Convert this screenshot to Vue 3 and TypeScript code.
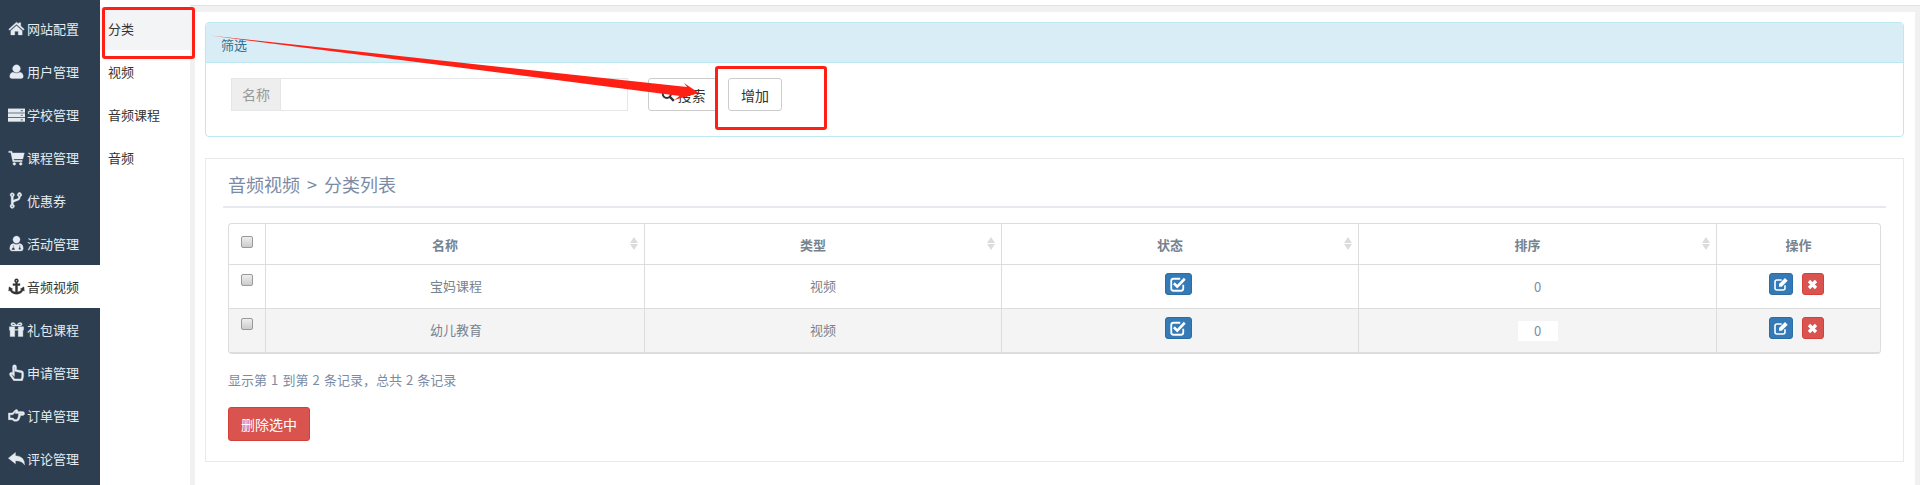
<script setup lang="ts">
interface NavItem { label: string; icon: string; active?: boolean }
const nav: NavItem[] = [
  { label: '网站配置', icon: 'home' },
  { label: '用户管理', icon: 'user' },
  { label: '学校管理', icon: 'server' },
  { label: '课程管理', icon: 'cart' },
  { label: '优惠券', icon: 'fork' },
  { label: '活动管理', icon: 'doctor' },
  { label: '音频视频', icon: 'anchor', active: true },
  { label: '礼包课程', icon: 'gift' },
  { label: '申请管理', icon: 'handup' },
  { label: '订单管理', icon: 'handright' },
  { label: '评论管理', icon: 'reply' },
]
const icons: Record<string, string> = {
  home: 'M12 3 L15 5.7 V4 H18 V8.4 L23 13 L21.6 14.5 L12 6 L2.4 14.5 L1 13 Z M12 8 L20 15 V21 H14.5 V16 H9.5 V21 H4 V15 Z',
  user: 'M12 2.5 A5.5 5.5 0 1 1 11.99 2.5 Z M7 13 Q12 16 17 13 Q21.5 14 21.5 19 Q21.5 22 18.5 22 H5.5 Q2.5 22 2.5 19 Q2.5 14 7 13 Z',
  server: 'M0 4 H24 V9 H0 Z M0 10.5 H24 V15.5 H0 Z M0 17 H24 V22 H0 Z M18 5.7 V7.3 H21 V5.7 Z M18 12.2 V13.8 H21 V12.2 Z M18 18.7 V20.3 H21 V18.7 Z',
  cart: 'M1 3 H5.5 L6.2 5.5 H23 L21 14 H8 L8.4 16 H20 V18 H6.8 L4 5 H1 Z M9 19 A2 2 0 1 1 8.99 19 Z M18 19 A2 2 0 1 1 17.99 19 Z',
  fork: 'M6 1 A3 3 0 0 1 7.5 6.6 V11.5 Q9 10.5 12 10 Q15 9.5 15 7 V6.6 A3 3 0 1 1 17.5 6.6 Q17.5 11 13 12.3 Q8.5 13.5 7.5 15 V17.4 A3 3 0 1 1 4.5 17.4 V6.6 A3 3 0 0 1 6 1 Z M6 3 A1 1 0 1 0 6.01 3 Z M16.2 3 A1 1 0 1 0 16.21 3 Z M6 19 A1 1 0 1 0 6.01 19 Z',
  doctor: 'M12 1.5 A5 5 0 1 1 11.99 1.5 Z M7.5 12 Q12 15 16.5 12 Q21.5 13 21.5 19 Q21.5 22.5 18.5 22.5 H5.5 Q2.5 22.5 2.5 19 Q2.5 13 7.5 12 Z M7 14.5 V18 H6 L5 21 H10 L9 18 H8 V14.5 Z M16 14.5 V17.5 A1.6 1.6 0 1 0 17.2 17.5 V14.5 Z',
  anchor: 'M12 1 A2.8 2.8 0 0 1 13.5 6.2 V8 H17 V10.5 H13.5 V19.6 Q17.5 19 19 16.5 L17.3 15.5 L22.5 12.5 L23 18.5 L21.2 17.6 Q18.5 23 12 23 Q5.5 23 2.8 17.6 L1 18.5 L1.5 12.5 L6.7 15.5 L5 16.5 Q6.5 19 10.5 19.6 V10.5 H7 V8 H10.5 V6.2 A2.8 2.8 0 0 1 12 1 Z M12 2.8 A1 1 0 1 0 12.01 2.8 Z',
  gift: 'M2 8 H9.5 V12 H14.5 V8 H22 V13 H21 V22 H14.5 V13 H9.5 V22 H3 V13 H2 Z M7 2 Q10 2 12 6 Q14 2 17 2 Q20 2 20 4.5 Q20 7 17 7 H7 Q4 7 4 4.5 Q4 2 7 2 Z M7 3.8 Q6 3.8 6 4.7 Q6 5.5 7 5.5 H10 Q8.5 3.8 7 3.8 Z M17 3.8 Q15.5 3.8 14 5.5 H17 Q18 5.5 18 4.7 Q18 3.8 17 3.8 Z',
  handup: 'M9 1 Q12 1 12 4 V8 L19.5 9.5 Q22 10 22 13 V18 L20.5 23.5 H8 L2.5 16 Q1 13.5 3.5 12 Q5 11.2 6.5 12.5 V4 Q6.5 1 9 1 Z M9.2 4 Q9 4 9 4.5 V17.8 L5.8 14.8 Q5 14.2 4.8 14.8 L9.5 21 H18.4 L19.3 17.6 V13.2 Q19.3 12.4 18.5 12.2 L9.6 10.4 V4.5 Q9.6 4 9.2 4 Z',
  handright: 'M0.5 8.5 H6 L10.5 4 Q13 2.5 14 5 L13.5 6.5 H20.5 Q23.5 6.5 23.5 9.3 Q23.5 12 20.5 12 H17.5 Q17.5 14.5 16.5 16 Q16 19.5 12.5 20 H8.5 L6 18 H0.5 Z M3 11 V15.5 H7 L9.4 17.5 H12 Q13.8 17.2 14 14.8 Q15 13.5 14.8 9.5 H20.5 Q21 9.5 21 9.2 Q21 9 20.5 9 H10.2 L11 6.5 L7 11 Z',
  reply: 'M10.5 3.5 V8 Q23.5 8.5 23.5 21 Q20 15 10.5 15 V19.5 L0.5 11.5 Z',
}
const columns = [
  { label: '名称', sortable: true, cls: 'c-name' },
  { label: '类型', sortable: true, cls: 'c-type' },
  { label: '状态', sortable: true, cls: 'c-state' },
  { label: '排序', sortable: true, cls: 'c-sort' },
  { label: '操作', sortable: false, cls: 'c-act' },
]
const rows = [
  { name: '宝妈课程', type: '视频', sort: 0, odd: false },
  { name: '幼儿教育', type: '视频', sort: 0, odd: true },
]
const subs = ['分类', '视频', '音频课程', '音频']
</script>

<template>
  <div class="page">
    <aside class="nav">
      <a v-for="n in nav" :key="n.label" class="nav-item" :class="{ on: n.active }">
        <svg class="nav-ico" viewBox="0 0 24 24"><path :d="icons[n.icon]" fill="currentColor" fill-rule="evenodd" /></svg>
        <span>{{ n.label }}</span>
      </a>
    </aside>
    <nav class="sub">
      <a v-for="(s, i) in subs" :key="s" class="sub-item" :class="{ on: i === 0 }">{{ s }}</a>
    </nav>
    <main class="main">
      <div class="topline"></div>
      <div class="content">
        <section class="filter">
          <header class="filter-head">筛选</header>
          <div class="filter-body">
            <div class="group">
              <span class="addon">名称</span>
              <input class="input" />
            </div>
            <button class="btn search">
              <svg class="s-ico" viewBox="0 0 24 24"><circle cx="10" cy="10" r="7" fill="none" stroke="currentColor" stroke-width="3.4" /><path d="M15 15 L22 22" stroke="currentColor" stroke-width="4" /></svg>
              搜索
            </button>
            <button class="btn">增加</button>
          </div>
        </section>
        <section class="list">
          <h3 class="title">音频视频 &gt; 分类列表</h3>
          <div class="table">
            <div class="row head">
              <div class="cell c-check"><span class="check"></span></div>
              <div v-for="c in columns" :key="c.label" class="cell" :class="[c.cls, { sortable: c.sortable }]">
                <b>{{ c.label }}</b>
                <span v-if="c.sortable" class="sort"><i class="up"></i><i class="down"></i></span>
              </div>
            </div>
            <div v-for="r in rows" :key="r.name" class="row body" :class="{ odd: r.odd }">
              <div class="cell c-check"><span class="check"></span></div>
              <div class="cell c-name"><span class="val">{{ r.name }}</span></div>
              <div class="cell c-type"><span class="val">{{ r.type }}</span></div>
              <div class="cell c-state">
                <span class="mini blue state">
                  <svg viewBox="0 0 24 24" class="mini-ico big"><path d="M19 13 V18 Q19 21 16 21 H6 Q3 21 3 18 V8 Q3 5 6 5 H15" fill="none" stroke="#fff" stroke-width="2.4" /><path d="M6.5 11 L11 15.5 L21 5" fill="none" stroke="#fff" stroke-width="3.4" /></svg>
                </span>
              </div>
              <div class="cell c-sort"><span class="num">{{ r.sort }}</span></div>
              <div class="cell c-act">
                <div class="acts">
                  <span class="mini blue edit">
                    <svg viewBox="0 0 24 24" class="mini-ico"><path d="M18 14 V18 Q18 21 15 21 H6 Q3 21 3 18 V9 Q3 6 6 6 H13" fill="none" stroke="#fff" stroke-width="2.4" /><path d="M9 12 L18 3 L22 7 L13 16 H9 Z" fill="#fff" /></svg>
                  </span>
                  <span class="mini red del">
                    <svg viewBox="0 0 24 24" class="mini-ico x"><path d="M5.5 5.5 L18.5 18.5 M18.5 5.5 L5.5 18.5" stroke="#fff" stroke-width="6" /></svg>
                  </span>
                </div>
              </div>
            </div>
          </div>
          <p class="summary">显示第 1 到第 2 条记录，总共 2 条记录</p>
          <button class="danger">删除选中</button>
        </section>
      </div>
    </main>

    <div class="mark box-a"></div>
    <div class="mark box-b"></div>
    <svg class="arrow" width="1920" height="485" viewBox="0 0 1920 485">
      <path d="M210 35.5 L687 87 L684 83 L699 93 L674 100 L680 96 Z" fill="#ff2015" />
    </svg>
  </div>
</template>

<style>
html, body { margin: 0; background: #fff; }
</style>

<style scoped>
.page {
  position: relative;
  display: flex;
  width: 1920px;
  height: 485px;
  overflow: hidden;
  font-family: "Noto Sans CJK SC", "Liberation Sans", sans-serif;
  font-size: 13px;
  color: #333;
}
.nav {
  flex: 0 0 100px;
  box-sizing: border-box;
  padding-top: 7px;
  background: #2c3e50;
}
.nav-item {
  display: flex;
  align-items: center;
  height: 43px;
  box-sizing: border-box;
  padding-left: 8px;
  gap: 2px;
  color: #e4ebf1;
}
.nav-item.on { background: #fff; color: #333; }
.nav-ico { width: 17px; height: 17px; flex: none; }
.nav-ico path { stroke: currentColor; stroke-width: 0.5; }
.sub { flex: 0 0 90px; box-sizing: border-box; padding-top: 7px; }
.sub-item {
  display: flex;
  align-items: center;
  height: 43px;
  padding-left: 8px;
  color: #333;
}
.sub-item.on { background: #f3f4f6; }
.main {
  flex: 1;
  display: flex;
  flex-direction: column;
  min-width: 0;
  background: #f1f1f1;
  padding: 0 5px;
}
.topline { height: 6px; background: #fff; border-bottom: 1px solid #dde3e8; box-sizing: border-box; margin: 0 -5px; flex: none; }
.content {
  flex: 1;
  background: #fff;
  margin-top: 6px;
  box-sizing: border-box;
  padding: 10px 11px 0 10px;
}
.filter {
  height: 115px;
  box-sizing: border-box;
  border: 1px solid #bce8f1;
  border-radius: 4px;
  overflow: hidden;
}
.filter-head {
  height: 40px;
  box-sizing: border-box;
  background: #d9edf7;
  border-bottom: 1px solid #bce8f1;
  color: #31708f;
  padding: 12px 0 0 15px;
  font-size: 13px;
  line-height: 20px;
}
.filter-body {
  display: flex;
  padding: 15px 0 0 25px;
  color: #555;
  font-size: 14px;
}
.group { display: flex; width: 397px; height: 33px; }
.addon {
  width: 49px;
  box-sizing: border-box;
  background: #eee;
  border: 1px solid #e5e6e7;
  border-right: 0;
  color: #999;
  text-align: center;
  line-height: 31px;
}
.input {
  flex: 1;
  min-width: 0;
  box-sizing: border-box;
  border: 1px solid #e5e6e7;
  outline: 0;
  padding: 0;
  background: #fff;
}
.btn {
  height: 33px;
  box-sizing: border-box;
  margin-left: 10px;
  width: 54px;
  padding: 0;
  background: #fff;
  border: 1px solid #ccc;
  border-radius: 3px;
  color: #333;
  font: inherit;
  display: flex;
  align-items: center;
  justify-content: center;
  gap: 3px;
}
.btn.search { margin-left: 20px; width: 70px; }
.s-ico { width: 14px; height: 14px; }
.list {
  margin-top: 21px;
  height: 304px;
  box-sizing: border-box;
  border: 1px solid #e7eaec;
  padding: 0 22px;
}
.title {
  margin: 0 -5px 15px -5px;
  height: 49px;
  box-sizing: border-box;
  padding: 12px 0 0 5px;
  font-size: 18px;
  line-height: 27px;
  font-weight: 400;
  word-spacing: 3px;
  color: #7b8ba5;
  border-bottom: 2px solid #e6e9ed;
}
.table {
  border: 1px solid #ddd;
  border-bottom-width: 2px;
  border-radius: 4px;
  overflow: hidden;
  color: #76838f;
}
.row { display: flex; }
.row.head { height: 40px; }
.row.body { height: 44px; border-top: 1px solid #ddd; box-sizing: border-box; }
.row.odd { background: #f4f4f4; }
.cell {
  position: relative;
  display: flex;
  align-items: center;
  justify-content: center;
  box-sizing: border-box;
  border-left: 1px solid #ddd;
}
.c-check { width: 36px; border-left: 0; align-items: flex-start; padding-top: 12px; }
.row.body .c-check { padding-top: 9px; }
.c-name { width: 379px; }
.c-type { width: 357px; }
.c-state { width: 357px; }
.c-sort { width: 358px; }
.c-act { flex: 1; }
.cell.sortable { padding-right: 20px; }
.cell b { font-weight: 700; font-size: 13px; color: #76838f; }
.val { margin-top: -2px; }
.c-name .val { margin-left: 2px; }
.check {
  width: 10px;
  height: 10px;
  border: 1px solid #999;
  border-radius: 2px;
  background: linear-gradient(#eee, #ccc);
  display: block;
}
.sort { position: absolute; right: 6px; top: 13px; display: flex; flex-direction: column; gap: 1px; }
.sort i { display: block; width: 0; height: 0; border-left: 4px solid transparent; border-right: 4px solid transparent; }
.sort .up { border-bottom: 6px solid #dcdcdc; }
.sort .down { border-top: 6px solid #dcdcdc; }
.mini {
  display: inline-flex;
  align-items: center;
  justify-content: center;
  box-sizing: border-box;
  height: 22px;
  border-radius: 3px;
}
.mini.blue { background: #337ab7; border: 1px solid #2e6da4; }
.mini.red { background: #d9534f; border: 1px solid #d43f3a; }
.state { width: 27px; margin: -5px 0 0 -4px; }
.acts { display: flex; margin: -5px 0 0 -5px; }
.edit { width: 24px; }
.del { width: 22px; margin-left: 9px; }
.mini-ico { width: 16px; height: 16px; }
.mini-ico.big { width: 18px; height: 18px; }
.mini-ico.x { width: 13px; height: 13px; }
.num {
  width: 40px;
  height: 20px;
  line-height: 20px;
  text-align: center;
  font-size: 13px;
  color: #7b8ba5;
}
.odd .num { background: #fff; }
.summary {
  margin: 16px 0 0;
  line-height: 20px;
  color: #7b8ba5;
  font-size: 13px;
  word-spacing: 1.2px;
}
.danger {
  display: block;
  margin-top: 17px;
  width: 82px;
  height: 34px;
  padding: 0;
  background: #d9534f;
  border: 1px solid #d43f3a;
  border-radius: 3px;
  color: #fff;
  font: inherit;
  font-size: 14px;
}
.mark {
  position: absolute;
  box-sizing: border-box;
  border: 3px solid #ff2015;
  border-radius: 3px;
}
.box-a { left: 102px; top: 7px; width: 93px; height: 52px; }
.box-b { left: 715px; top: 66px; width: 112px; height: 64px; }
.arrow { position: absolute; left: 0; top: 0; pointer-events: none; }
</style>
